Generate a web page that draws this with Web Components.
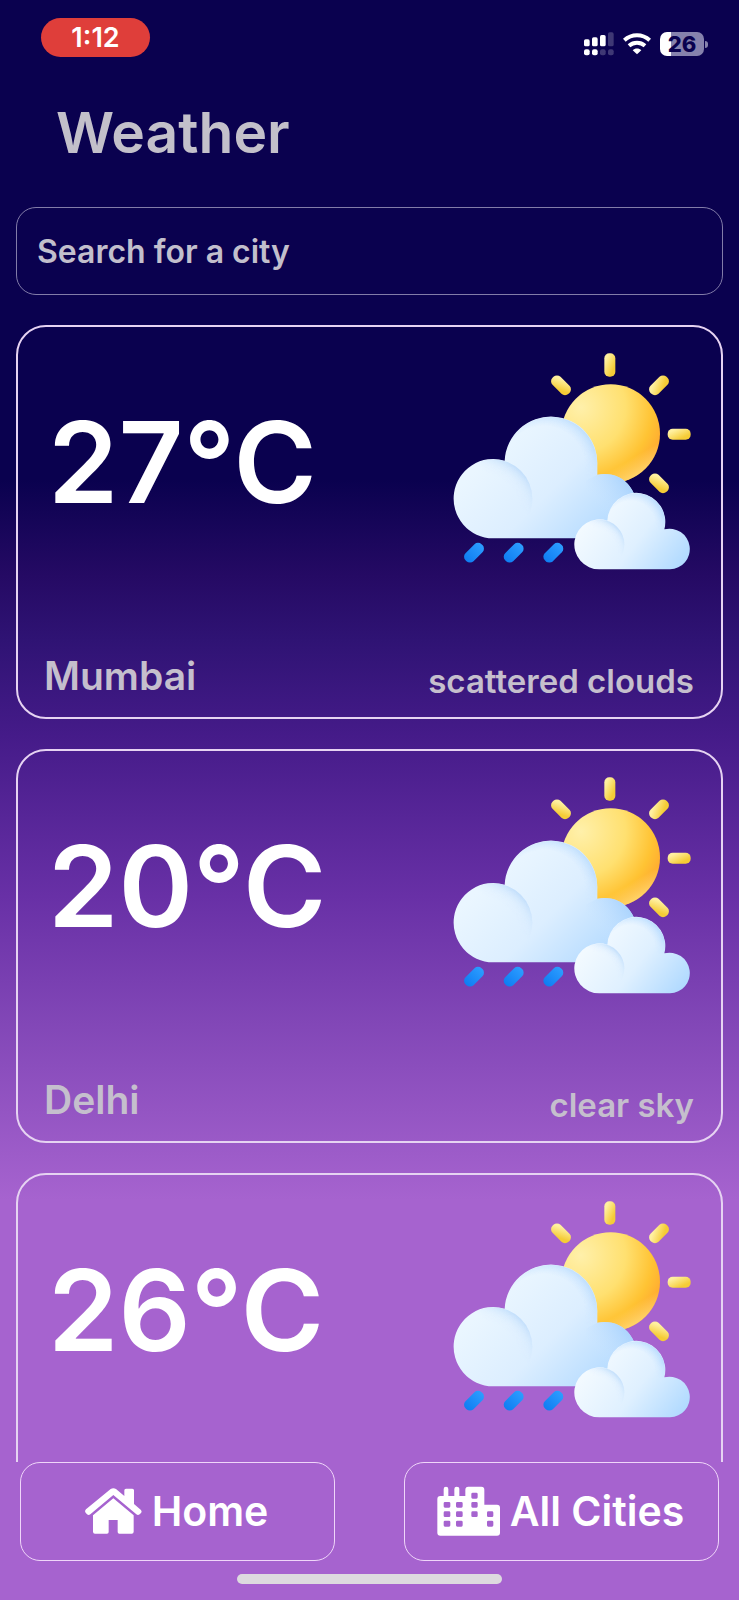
<!DOCTYPE html>
<html lang="en">
<head>
<meta charset="utf-8">
<meta name="viewport" content="width=device-width, initial-scale=1">
<title>Weather</title>
<style>
  body { margin: 0; font-family: Inter, "Open Sans", sans-serif; font-weight: 600; color: #fff; }
</style>
</head>
<body>
<weather-app></weather-app>

<script>
const define = (name, html) => {
  const template = document.createElement('template');
  template.innerHTML = html;
  customElements.define(name, class extends HTMLElement {
    constructor() {
      super();
      this.attachShadow({ mode: 'open' }).append(template.content.cloneNode(true));
    }
  });
};

define('status-bar', `
  <style>
    :host { display: flex; justify-content: space-between; align-items: center; padding: 18px 31px 0 41px; }
    .time { box-sizing: border-box; width: 109px; height: 39px; border-radius: 20px; background: #df3e3a;
            display: grid; place-items: center; font-size: 27px; line-height: 39px; }
    .right { display: flex; align-items: center; gap: 9px; padding-top: 13px; }
    svg { display: block; }
    .battery { display: flex; align-items: center; gap: 1px; }
    .level { width: 44px; height: 24px; border-radius: 7px; display: grid; place-items: center;
             background: linear-gradient(90deg, #fff 11px, #8682ad 11px);
             color: #0a014f; font-size: 22px; line-height: 24px; font-weight: 800; }
    .tip { width: 3px; height: 7px; border-radius: 0 3px 3px 0; background: #8682ad; }
  </style>
  <div class="time">1:12</div>
  <div class="right">
    <svg width="30" height="24" viewBox="0 0 90 72" fill="#fff" aria-hidden="true">
      <rect x="0" y="22" width="17" height="21" rx="5"/><rect x="24" y="16" width="17" height="27" rx="5"/>
      <rect x="48" y="9" width="17" height="34" rx="5"/><rect x="72" y="1" width="17" height="42" rx="5" opacity=".22"/>
      <rect x="0" y="52" width="17" height="18" rx="6"/><rect x="24" y="52" width="17" height="18" rx="6"/>
      <rect x="48" y="52" width="17" height="18" rx="6" opacity=".22"/><rect x="72" y="52" width="17" height="18" rx="6" opacity=".22"/>
    </svg>
    <svg width="28" height="22" viewBox="0 0 84 66" fill="none" stroke="#fff" stroke-width="12" aria-hidden="true">
      <path d="M4 22C26 2 58 2 80 22"/><path d="M18 38C32 26 52 26 66 38"/>
      <path d="M42 64L29 52C36 45 48 45 55 52Z" fill="#fff" stroke="none"/>
    </svg>
    <div class="battery"><span class="level">26</span><span class="tip"></span></div>
  </div>
`);

define('city-search', `
  <style>
    :host { display: block; padding: 0 16px; }
    input { box-sizing: border-box; display: block; width: 100%; height: 88px; margin: 0; padding: 0 20px;
            border: 1px solid #827ca9; border-radius: 20px; background: none; color: #fff; outline: none;
            font: inherit; font-size: 32px; }
    input::placeholder { color: #c2bfcc; opacity: 1; }
  </style>
  <input type="text" placeholder="Search for a city" aria-label="Search for a city">
`);

define('weather-icon', `
  <style>:host { display: block; } svg { display: block; }</style>
  <svg width="238" height="217" viewBox="67 97 714 651" role="img" aria-label="Sun behind rain clouds">
    <defs>
      <radialGradient id="sun" gradientUnits="userSpaceOnUse" cx="450" cy="260" r="270">
        <stop offset="0" stop-color="#fff0aa"/><stop offset=".5" stop-color="#ffe070"/>
        <stop offset=".8" stop-color="#ffc333"/><stop offset="1" stop-color="#ffa630"/>
      </radialGradient>
      <linearGradient id="glow" gradientUnits="userSpaceOnUse" x1="590" y1="420" x2="625" y2="480">
        <stop offset="0" stop-color="#ffe27a" stop-opacity="0"/><stop offset="1" stop-color="#ffe27a"/>
      </linearGradient>
      <linearGradient id="ray" x1="0" y1="0" x2="1" y2="1">
        <stop offset=".2" stop-color="#fff0a0"/><stop offset=".75" stop-color="#f5cc36"/>
      </linearGradient>
      <linearGradient id="cloud" gradientUnits="userSpaceOnUse" x1="230" y1="350" x2="520" y2="640">
        <stop offset="0" stop-color="#eaf6ff"/><stop offset=".5" stop-color="#dceeff"/><stop offset="1" stop-color="#b5dbff"/>
      </linearGradient>
      <linearGradient id="puff" gradientUnits="userSpaceOnUse" x1="500" y1="560" x2="600" y2="490">
        <stop offset="0" stop-color="#cce5ff" stop-opacity="0"/><stop offset="1" stop-color="#a9d3fd"/>
      </linearGradient>
      <radialGradient id="left" gradientUnits="userSpaceOnUse" cx="165" cy="565" r="155">
        <stop offset=".65" stop-color="#e0f0ff" stop-opacity="0"/><stop offset="1" stop-color="#c0ddfb"/>
      </radialGradient>
      <linearGradient id="fade" gradientUnits="userSpaceOnUse" x1="225" y1="520" x2="285" y2="460">
        <stop offset="0" stop-color="#fff" stop-opacity="0"/><stop offset="1" stop-color="#fff"/>
      </linearGradient>
      <mask id="m1"><rect x="60" y="400" width="300" height="270" fill="url(#fade)"/></mask>
      <radialGradient id="rim" gradientUnits="userSpaceOnUse" cx="340" cy="440" r="165">
        <stop offset=".75" stop-color="#cde6ff" stop-opacity="0"/><stop offset="1" stop-color="#bbdcfd"/>
      </radialGradient>
      <linearGradient id="fadeRim" gradientUnits="userSpaceOnUse" x1="0" y1="390" x2="0" y2="470">
        <stop offset="0" stop-color="#fff"/><stop offset="1" stop-color="#fff" stop-opacity="0"/>
      </linearGradient>
      <mask id="m3"><rect x="210" y="280" width="300" height="300" fill="url(#fadeRim)"/></mask>
      <linearGradient id="small" gradientUnits="userSpaceOnUse" x1="500" y1="560" x2="750" y2="750">
        <stop offset="0" stop-color="#f3faff"/><stop offset=".5" stop-color="#dff0ff"/><stop offset="1" stop-color="#afd9ff"/>
      </linearGradient>
      <radialGradient id="smallLeft" gradientUnits="userSpaceOnUse" cx="495" cy="687" r="95">
        <stop offset=".65" stop-color="#e0f0ff" stop-opacity="0"/><stop offset="1" stop-color="#c0ddfb"/>
      </radialGradient>
      <linearGradient id="fade2" gradientUnits="userSpaceOnUse" x1="525" y1="662" x2="562" y2="625">
        <stop offset="0" stop-color="#fff" stop-opacity="0"/><stop offset="1" stop-color="#fff"/>
      </linearGradient>
      <mask id="m2"><rect x="430" y="590" width="160" height="160" fill="url(#fade2)"/></mask>
      <radialGradient id="smallRim" gradientUnits="userSpaceOnUse" cx="600" cy="615" r="106">
        <stop offset=".7" stop-color="#cde6ff" stop-opacity="0"/><stop offset="1" stop-color="#b9dcff"/>
      </radialGradient>
      <linearGradient id="fadeSmall" gradientUnits="userSpaceOnUse" x1="0" y1="585" x2="0" y2="630">
        <stop offset="0" stop-color="#fff"/><stop offset="1" stop-color="#fff" stop-opacity="0"/>
      </linearGradient>
      <mask id="m4"><rect x="520" y="510" width="190" height="190" fill="url(#fadeSmall)"/></mask>
      <linearGradient id="drop" x1="0" y1="0" x2="1" y2="0">
        <stop offset="0" stop-color="#0f7df2"/><stop offset="1" stop-color="#2c9dff"/>
      </linearGradient>
    </defs>
    <g fill="url(#ray)">
      <rect x="521" y="98" width="33" height="70" rx="15"/>
      <rect x="711" y="324" width="69" height="33" rx="15"/>
      <rect x="-34" y="-17" width="68" height="34" rx="15" transform="translate(391 194) rotate(45)"/>
      <rect x="-34" y="-17" width="68" height="34" rx="15" transform="translate(685 194) rotate(-45)"/>
      <rect x="-34" y="-17" width="68" height="34" rx="15" transform="translate(685 488) rotate(45)"/>
    </g>
    <circle cx="540" cy="339" r="148" fill="url(#sun)"/>
    <circle cx="540" cy="339" r="148" fill="url(#glow)"/>
    <path d="M187 653A119 119 0 1 1 222 420A139 139 0 1 1 500 434V462A96 96 0 0 1 617 560V653Z" fill="url(#cloud)"/>
    <path d="M465 480L500 462A96 96 0 0 1 617 560V653H465Z" fill="url(#puff)"/>
    <circle cx="361" cy="427" r="138" fill="url(#rim)" mask="url(#m3)"/>
    <circle cx="187" cy="534" r="118" fill="url(#left)" mask="url(#m1)"/>
    <path d="M507 746A75 75 0 1 1 530 600A87 87 0 1 1 701 626A61 61 0 1 1 718 746Z" fill="url(#small)"/>
    <circle cx="617" cy="604" r="86" fill="url(#smallRim)" mask="url(#m4)"/>
    <circle cx="507" cy="671" r="74" fill="url(#smallLeft)" mask="url(#m2)"/>
    <g fill="url(#drop)">
      <rect x="-34" y="-17" width="68" height="34" rx="15" transform="translate(130 696) rotate(-45)"/>
      <rect x="-34" y="-17" width="68" height="34" rx="15" transform="translate(249 696) rotate(-45)"/>
      <rect x="-34" y="-17" width="68" height="34" rx="15" transform="translate(368 696) rotate(-45)"/>
    </g>
  </svg>
`);

define('city-card', `
  <style>
    :host { box-sizing: border-box; flex: none; display: flex; flex-direction: column; justify-content: space-between;
            height: 394px; padding: 26px 27px 17px 26px; border: 2px solid #e6d3f2; border-radius: 30px; }
    .top, .bottom { display: flex; justify-content: space-between; }
    .top { align-items: center; padding: 0 3px 0 4px; }
    .bottom { align-items: flex-end; color: #c5bfcd; }
    .temp { font-size: 113px; line-height: 120px; }
    .city { font-size: 39px; line-height: 48px; }
    .sky { font-size: 33px; line-height: 38px; }
  </style>
  <div class="top"><div class="temp"><slot name="temp"></slot></div><weather-icon></weather-icon></div>
  <div class="bottom"><div class="city"><slot name="city"></slot></div><div class="sky"><slot name="sky"></slot></div></div>
`);

define('city-list', `
  <style>
    :host { flex: 1; min-height: 0; display: flex; flex-direction: column; gap: 30px; padding: 30px 16px 0;
            overflow-y: auto; scrollbar-width: none; }
  </style>
  <slot></slot>
`);

define('nav-button', `
  <style>
    :host { display: block; width: 315px; }
    button { box-sizing: border-box; width: 100%; height: 99px; margin: 0; padding: 0 2px 2px 0; display: flex;
             align-items: center; justify-content: center; gap: 10px; border: 1px solid #f0d6fa; border-radius: 20px;
             background: none; color: #fff; font: inherit; font-size: 41px; line-height: 48px; }
  </style>
  <button type="button"><slot name="icon"></slot><slot name="label"></slot></button>
`);

define('bottom-nav', `
  <style>
    :host { display: flex; justify-content: space-between; padding: 0 20px; }
    svg { display: block; }
  </style>
  <nav-button>
    <svg slot="icon" width="57" height="46" viewBox="251 142 171 138" fill="#fff" aria-hidden="true">
      <path d="M328 145Q336 140 344 145L369 166V149Q369 144 374 144H393Q398 144 398 149V190L418 207Q423 212 419 217L415 221Q410 225 405 221L336 163L267 221Q262 225 257 221L253 216Q249 211 254 206Z"/>
      <path d="M336 173L397 224V273Q397 279 391 279H354Q349 279 349 274V238H322V274Q322 279 317 279H281Q275 279 275 273V224Z"/>
    </svg><span slot="label">Home</span>
  </nav-button>
  <nav-button>
    <svg slot="icon" width="63" height="50" viewBox="206 136 189 150" fill="#fff" aria-hidden="true">
      <path fill-rule="evenodd" d="M216 166H226V145Q226 138 233 138Q240 138 240 145V166H258V145Q258 138 265 138Q273 138 273 145V166H291V147Q291 138 300 138H339Q348 138 348 147V192H386Q395 192 395 201V276Q395 285 386 285H216Q207 285 207 276V175Q207 166 216 166Z
      M230 184h12q4 0 4 4v9q0 4-4 4h-12q-4 0-4-4v-9q0-4 4-4Z M230 212h12q4 0 4 4v9q0 4-4 4h-12q-4 0-4-4v-9q0-4 4-4Z M230 240h12q4 0 4 4v10q0 4-4 4h-12q-4 0-4-4v-10q0-4 4-4Z
      M267 184h12q4 0 4 4v9q0 4-4 4h-12q-4 0-4-4v-9q0-4 4-4Z M267 212h12q4 0 4 4v9q0 4-4 4h-12q-4 0-4-4v-9q0-4 4-4Z M267 240h12q4 0 4 4v10q0 4-4 4h-12q-4 0-4-4v-10q0-4 4-4Z
      M313 156h11q4 0 4 4v10q0 4-4 4h-11q-4 0-4-4v-10q0-4 4-4Z M313 184h11q4 0 4 4v9q0 4-4 4h-11q-4 0-4-4v-9q0-4 4-4Z M313 212h11q4 0 4 4v9q0 4-4 4h-11q-4 0-4-4v-9q0-4 4-4Z
      M360 212h11q4 0 4 4v9q0 4-4 4h-11q-4 0-4-4v-9q0-4 4-4Z M360 240h11q4 0 4 4v10q0 4-4 4h-11q-4 0-4-4v-10q0-4 4-4Z"/>
    </svg><span slot="label">All Cities</span>
  </nav-button>
`);

define('weather-app', `
  <style>
    :host { box-sizing: border-box; height: 100vh; display: flex; flex-direction: column;
            background: linear-gradient(#0a014f 30%, #250a64 36%, #2f1374 40%, #451b89 46%, #6830a6 56%, #8247b7 64%, #a663cf 75%); }
    h1 { margin: 0; padding: 41px 56px 39px; font-size: 57px; line-height: 70px; font-weight: 600; color: #c3c0ca; }
    .indicator { align-self: center; width: 265px; height: 10px; margin: 13px 0 16px; border-radius: 5px; background: #dddadf; }
  </style>
  <status-bar></status-bar>
  <h1>Weather</h1>
  <city-search></city-search>
  <city-list>
    <city-card><span slot="temp">27°C</span><span slot="city">Mumbai</span><span slot="sky">scattered clouds</span></city-card>
    <city-card><span slot="temp">20°C</span><span slot="city">Delhi</span><span slot="sky">clear sky</span></city-card>
    <city-card><span slot="temp">26°C</span></city-card>
  </city-list>
  <bottom-nav></bottom-nav>
  <div class="indicator"></div>
`);
</script>
</body>
</html>
